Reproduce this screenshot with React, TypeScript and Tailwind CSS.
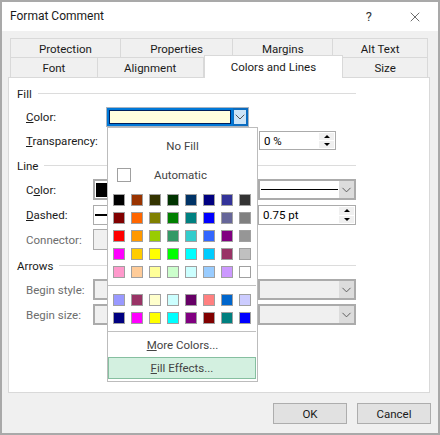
import { ChevronDown, X } from "lucide-react";

const font = "font-['Roboto','Noto_Sans',sans-serif]";

const standardColors = [
  "bg-[#000000]", "bg-[#993300]", "bg-[#333300]", "bg-[#003300]", "bg-[#003366]", "bg-[#000080]", "bg-[#333399]", "bg-[#333333]",
  "bg-[#800000]", "bg-[#ff6600]", "bg-[#808000]", "bg-[#008000]", "bg-[#008080]", "bg-[#0000ff]", "bg-[#666699]", "bg-[#808080]",
  "bg-[#ff0000]", "bg-[#ff9900]", "bg-[#99cc00]", "bg-[#339966]", "bg-[#33cccc]", "bg-[#3366ff]", "bg-[#800080]", "bg-[#969696]",
  "bg-[#ff00ff]", "bg-[#ffcc00]", "bg-[#ffff00]", "bg-[#00ff00]", "bg-[#00ffff]", "bg-[#00ccff]", "bg-[#993366]", "bg-[#c0c0c0]",
  "bg-[#ff99cc]", "bg-[#ffcc99]", "bg-[#ffff99]", "bg-[#ccffcc]", "bg-[#ccffff]", "bg-[#99ccff]", "bg-[#cc99ff]", "bg-[#ffffff]",
];

const recentColors = [
  "bg-[#9999ff]", "bg-[#993366]", "bg-[#ffffcc]", "bg-[#ccffff]", "bg-[#660066]", "bg-[#ff8080]", "bg-[#0066cc]", "bg-[#ccccff]",
  "bg-[#000080]", "bg-[#ff00ff]", "bg-[#ffff00]", "bg-[#00ffff]", "bg-[#800080]", "bg-[#800000]", "bg-[#008080]", "bg-[#0000ff]",
];

function Swatches({ colors }: { colors: string[] }) {
  return (
    <div className="ml-[5px] grid w-[138px] grid-cols-[repeat(8,12px)] gap-[6px]">
      {colors.map((c, i) => (
        <div key={i} className={`h-[12px] w-[12px] border border-[#a0a0a0] ${c}`} />
      ))}
    </div>
  );
}

function SectionHeader({ title }: { title: string }) {
  return (
    <div className="flex h-[16px] items-center">
      <span className="pt-[3px] text-[#1a1a1a]">{title}</span>
      <div className="ml-[6px] h-px flex-1 bg-[#dcdcdc]" />
    </div>
  );
}

function Tab({ label, className }: { label: string; className: string }) {
  return (
    <div className={`flex items-center justify-center border-t border-r border-[#d9d9d9] bg-[#f0f0f0] pt-[3px] ${className}`}>
      {label}
    </div>
  );
}

function Spinner() {
  return (
    <div className="flex w-[15px] flex-col gap-px self-stretch">
      <div className="flex flex-1 items-center justify-center bg-[#f0f0f0]">
        <div className="h-0 w-0 border-x-[3px] border-b-[3px] border-x-transparent border-b-black" />
      </div>
      <div className="flex flex-1 items-center justify-center bg-[#f0f0f0]">
        <div className="h-0 w-0 border-x-[3px] border-t-[3px] border-x-transparent border-t-black" />
      </div>
    </div>
  );
}

function ComboArrow() {
  return (
    <div className="flex w-[15px] items-center justify-center self-stretch bg-[#dcdcdc]">
      <ChevronDown size={16} strokeWidth={1.5} className="text-[#555555]" />
    </div>
  );
}

function Combo({ width, disabled, children }: { width: string; disabled?: boolean; children?: React.ReactNode }) {
  return (
    <div className={`flex h-full items-center border-2 border-[#ababab] ${disabled ? "bg-[#f0f0f0]" : "bg-white"} ${width}`}>
      <div className="flex h-full min-w-0 flex-1 items-center">{children}</div>
      <ComboArrow />
    </div>
  );
}

function Label({ disabled, children }: { disabled?: boolean; children: React.ReactNode }) {
  return <div className={`w-[76px] pt-[2px] pl-[9px] ${disabled ? "text-[#6d6d6d]" : "text-[#1a1a1a]"}`}>{children}</div>;
}

function ColorPopup() {
  return (
    <div className="absolute top-[49px] left-[98px] h-[255px] w-[151px] border border-[#bcbcbc] bg-white text-[#444444]">
      <div className="flex h-[34px] items-center justify-center pt-[4px]">No Fill</div>
      <div className="mt-[6px] flex h-[14px] items-center pl-[9px]">
        <div className="h-[14px] w-[14px] border border-[#a0a0a0]" />
        <span className="ml-[23px] pt-[2px]">Automatic</span>
      </div>
      <div className="mt-[12px]">
        <Swatches colors={standardColors} />
      </div>
      <div className="mt-[7px] mr-[1px] h-px bg-[#c0c0c0]" />
      <div className="mt-[8px]">
        <Swatches colors={recentColors} />
      </div>
      <div className="mt-[7px] mr-[1px] h-px bg-[#c0c0c0]" />
      <div className="flex h-[25px] items-center justify-center pt-[2px]">
        <span>
          <u>M</u>ore Colors...
        </span>
      </div>
      <div className="mr-[1px] flex h-[22px] items-center justify-center border border-[#86bfa0] bg-[#d3f0e0] pt-[2px]">
        <span>
          <u>F</u>ill Effects...
        </span>
      </div>
    </div>
  );
}

export default function App() {
  return (
    <div className={`flex h-[435px] w-[440px] flex-col border-2 border-[#a9a9a9] bg-[#f0f0f0] text-[11.5px] leading-none text-black ${font}`}>
      <div className="flex h-[29px] items-center justify-between bg-white pl-[8px]">
        <span className="pb-[1px] text-[12px] text-[#1a1a1a]">Format Comment</span>
        <div className="flex items-center">
          <span className="mr-[35px] text-[13px] text-[#333333]">?</span>
          <X size={16} strokeWidth={1} className="mr-[15px] text-[#222222]" />
        </div>
      </div>

      <div className="mt-[7px] ml-[8px] flex h-[19px] w-[418px] border-l border-[#d9d9d9] text-[#1a1a1a]">
        <Tab label="Protection" className="w-[110px]" />
        <Tab label="Properties" className="w-[113px]" />
        <Tab label="Margins" className="w-[100px]" />
        <Tab label="Alt Text" className="w-[95px]" />
      </div>
      <div className="relative ml-[8px] flex h-[20px] w-[418px] border-l border-[#d9d9d9] text-[#1a1a1a]">
        <Tab label="Font" className="w-[87px]" />
        <Tab label="Alignment" className="w-[106px]" />
        <div className="z-10 -mt-[2px] flex h-[23px] w-[140px] items-center justify-center border-x border-t border-[#d9d9d9] bg-white pt-[2px]">
          Colors and Lines
        </div>
        <Tab label="Size" className="w-[85px]" />
      </div>

      <div className="relative ml-[6px] h-[316px] w-[422px] border border-[#d9d9d9] bg-white pt-[7px] pl-[8px]">
        <div className="w-[339px]">
          <SectionHeader title="Fill" />
          <div className="mt-[6px] flex h-[20px] items-center">
            <div className="w-[89px] pt-[2px] pl-[9px] text-[#1a1a1a]">
              <u>C</u>olor:
            </div>
            <div className="flex h-full w-[143px] border border-[#a9b4c0] bg-white">
              <div className="flex-1 border-2 border-[#0078d7]">
                <div className="h-full border border-[#00205b] bg-[#ffffdd]" />
              </div>
              <div className="flex w-[15px] items-center justify-center border-2 border-l border-[#0a6cc0] bg-[#cce4f7]">
                <ChevronDown size={16} strokeWidth={1.5} className="shrink-0 text-[#555555]" />
              </div>
            </div>
          </div>
          <div className="mt-[4px] flex h-[19px] items-center">
            <div className="w-[89px] pt-[2px] pl-[9px] text-[#1a1a1a]">
              <u>T</u>ransparency:
            </div>
            <div className="ml-[153px] flex h-full w-[77px] items-center border border-[#ababab] bg-white p-px">
              <span className="flex-1 pt-[2px] pl-[3px]">0 %</span>
              <Spinner />
            </div>
          </div>

          <div className="mt-[7px]">
            <SectionHeader title="Line" />
          </div>
          <div className="mt-[6px] flex h-[21px] items-center">
            <Label>
              C<u>o</u>lor:
            </Label>
            <Combo width="w-[155px]">
              <div className="ml-[1px] h-[14px] w-[30px] bg-black" />
            </Combo>
            <div className="ml-[10px] h-full">
              <Combo width="w-[98px]">
                <div className="mx-[1px] h-px w-full bg-black" />
              </Combo>
            </div>
          </div>
          <div className="mt-[5px] flex h-[20px] items-center">
            <Label>
              <u>D</u>ashed:
            </Label>
            <div className="flex h-full w-[155px] items-center border border-[#ababab] bg-white pl-[1px]">
              <div className="h-[2px] w-[30px] bg-black" />
            </div>
            <div className="ml-[10px] flex h-full w-[98px] items-center border border-[#ababab] bg-white p-px">
              <span className="flex-1 pt-[2px] pl-[3px]">0.75 pt</span>
              <Spinner />
            </div>
          </div>
          <div className="mt-[4px] flex h-[21px] items-center">
            <Label disabled>Connector:</Label>
            <div className="h-full w-[155px] border border-[#ababab] bg-[#f0f0f0]" />
          </div>

          <div className="mt-[7px]">
            <SectionHeader title="Arrows" />
          </div>
          <div className="mt-[6px] flex h-[21px] items-center">
            <Label disabled>Begin style:</Label>
            <Combo width="w-[155px]" disabled />
            <div className="ml-[10px] h-full">
              <Combo width="w-[98px]" disabled />
            </div>
          </div>
          <div className="mt-[4px] flex h-[21px] items-center">
            <Label disabled>Begin size:</Label>
            <Combo width="w-[155px]" disabled />
            <div className="ml-[10px] h-full">
              <Combo width="w-[98px]" disabled />
            </div>
          </div>
        </div>
        <ColorPopup />
      </div>

      <div className="mt-[10px] mr-[7px] flex justify-end gap-[10px] text-[#1a1a1a]">
        <button className="h-[21px] w-[74px] border border-[#adadad] bg-[#e1e1e1] pt-[2px]">OK</button>
        <button className="h-[21px] w-[74px] border border-[#adadad] bg-[#e1e1e1] pt-[2px]">Cancel</button>
      </div>
    </div>
  );
}
